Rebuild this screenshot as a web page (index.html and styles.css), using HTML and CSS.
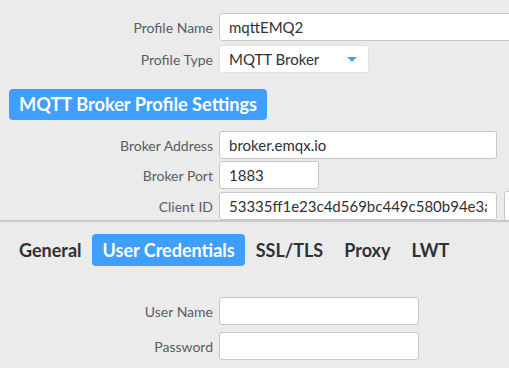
FILE: index.html
```html
<!doctype html>
<html lang="en">
    <head>
        <meta charset="UTF-8" />
        <meta name="viewport" content="width=device-width, initial-scale=1.0" />
        <title>Profile Settings</title>
        <link rel="stylesheet" href="styles.css">
    </head>
    <body>
        <div class="top-panel">
            <div class="form-row">
                <label class="row-label">Profile Name</label>
                <input class="field field-wide" type="text" value="mqttEMQ2" />
            </div>
            <div class="form-row">
                <label class="row-label">Profile Type</label>
                <div class="select">
                    <span>MQTT Broker</span>
                    <svg class="caret" width="10" height="5" viewBox="0 0 10 5">
                        <path d="M0 0 L10 0 L5 5 Z" fill="#409eff" />
                    </svg>
                </div>
            </div>

            <div class="section-title">MQTT Broker Profile Settings</div>

            <div class="form-row">
                <label class="row-label">Broker Address</label>
                <input class="field field-addr" type="text" value="broker.emqx.io" />
            </div>
            <div class="form-row">
                <label class="row-label">Broker Port</label>
                <input class="field field-port" type="text" value="1883" />
            </div>
            <div class="form-row">
                <label class="row-label">Client ID</label>
                <input class="field field-addr" type="text" value="53335ff1e23c4d569bc449c580b94e3a" />
                <div class="side-button"></div>
            </div>
        </div>

        <div class="bottom-panel">
            <div class="tabs">
                <div class="tab">General</div>
                <div class="tab active">User Credentials</div>
                <div class="tab">SSL/TLS</div>
                <div class="tab">Proxy</div>
                <div class="tab">LWT</div>
            </div>

            <div class="credentials">
                <div class="form-row">
                    <label class="row-label">User Name</label>
                    <input class="field field-cred" type="text" />
                </div>
                <div class="form-row">
                    <label class="row-label">Password</label>
                    <input class="field field-cred" type="password" />
                </div>
            </div>
        </div>
    </body>
</html>
```

FILE: styles.css
```css
body {
    margin: 0;
    background: #ebebeb;
    font-family: Lato, "Open Sans", sans-serif;
    color: #303133;
    overflow: hidden;
}
.top-panel {
    height: 222px;
    padding-top: 13px;
    box-sizing: border-box;
    overflow: hidden;
    border-bottom: 2px solid #c9c9c9;
}
.form-row {
    display: flex;
    align-items: center;
    gap: 6px;
    margin-bottom: 2px;
    white-space: nowrap;
}
.form-row:first-child {
    margin-bottom: 4px;
}
.row-label {
    width: 213px;
    flex-shrink: 0;
    text-align: right;
    font-size: 14px;
    color: #5a5c61;
}
.field {
    height: 28px;
    box-sizing: border-box;
    border: 1px solid #c6c6c6;
    border-radius: 3px;
    background: #fff;
    padding: 0 9px;
    font-family: Lato, "Open Sans", sans-serif;
    font-size: 15px;
    color: #303133;
    flex-shrink: 0;
}
.field-wide {
    width: 330px;
}
.field-addr {
    width: 278px;
}
.field-port {
    width: 100px;
}
.field-cred {
    width: 200px;
}
.select {
    width: 150px;
    height: 28px;
    box-sizing: border-box;
    border: 1px solid #e2e2e2;
    border-radius: 3px;
    background: #fff;
    padding: 0 6px 0 9px;
    display: flex;
    align-items: center;
    justify-content: space-between;
    font-size: 15px;
    color: #303133;
}
.caret {
    margin-right: 5px;
}
.side-button {
    width: 40px;
    height: 28px;
    margin-left: 1px;
    border: 1px solid #c6c6c6;
    border-radius: 3px;
    background: #fff;
    flex-shrink: 0;
}
.section-title {
    width: fit-content;
    margin: 16px 0 11px 9px;
    padding: 0 10px;
    height: 31px;
    line-height: 31px;
    background: #409eff;
    color: #fff;
    border-radius: 4px;
    font-size: 18.2px;
    font-weight: bold;
}
.bottom-panel {
    padding-top: 12px;
}
.tabs {
    display: flex;
    padding-left: 8.5px;
}
.tab {
    height: 32px;
    line-height: 32px;
    padding: 0 10.5px;
    font-size: 18px;
    font-weight: bold;
    color: #303133;
    border-radius: 4px;
}
.tab.active {
    background: #409eff;
    color: #fff;
}
.credentials {
    padding-top: 31px;
}
.credentials .form-row {
    margin-bottom: 7px;
}
```
